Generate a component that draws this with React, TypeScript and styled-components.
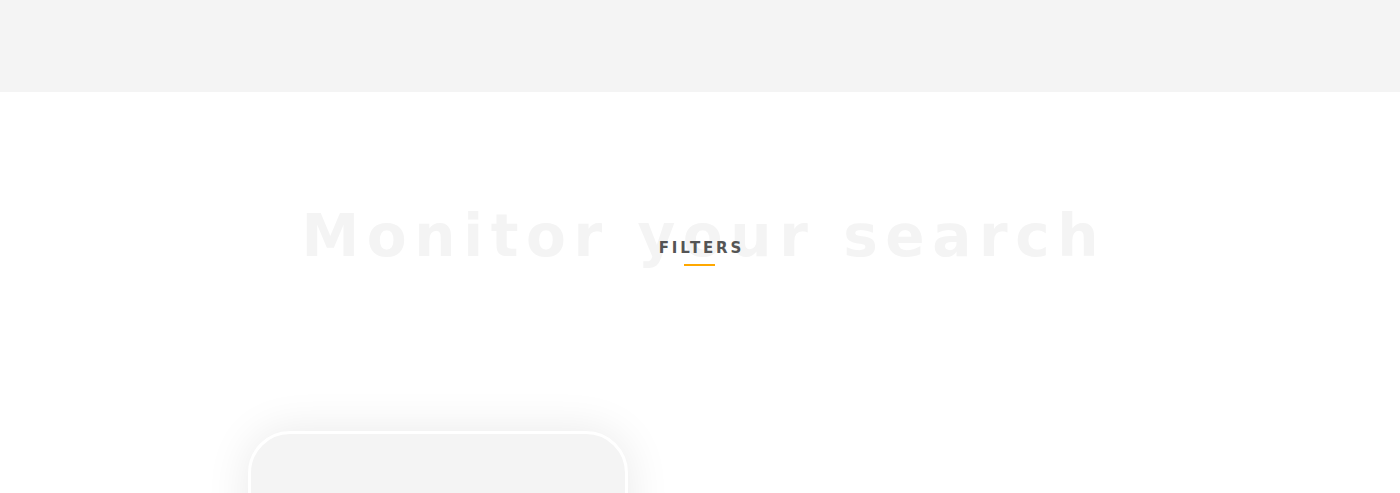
import React from "react";
import styled, { createGlobalStyle } from "styled-components";

const Global = createGlobalStyle`
  html, body { margin: 0; padding: 0; background: #ffffff; overflow: hidden; }
  body { font-family: "DejaVu Sans", "Liberation Sans", sans-serif; }
`;

const TopBar = styled.header`
  height: 92px;
  background: #f4f4f4;
`;

const Section = styled.section`
  display: flex;
  flex-direction: column;
  align-items: center;
  padding-top: 104px;
`;

const TitleStack = styled.div`
  display: grid;
  justify-items: center;
  align-items: start;
`;

const BigTitle = styled.h2`
  grid-area: 1 / 1;
  margin: 0;
  font-family: "DejaVu Sans", sans-serif;
  font-weight: 700;
  font-size: 58px;
  line-height: 80px;
  letter-spacing: 7.6px;
  margin-right: -7.6px;
  color: #f4f4f4;
  white-space: nowrap;
`;

const Label = styled.div`
  grid-area: 1 / 1;
  display: flex;
  flex-direction: column;
  align-items: center;
  padding-top: 42px;
`;

const LabelText = styled.span`
  font-family: "DejaVu Sans", sans-serif;
  font-weight: 700;
  font-size: 15px;
  line-height: 20px;
  letter-spacing: 2.8px;
  margin-right: -2.8px;
  color: #555555;
`;

const Underline = styled.span`
  width: 31px;
  height: 2px;
  margin-top: 6px;
  background: #ffa800;
`;

const Row = styled.div`
  width: 904px;
  display: flex;
  margin-top: 155px;
`;

const Card = styled.div`
  width: 374px;
  height: 200px;
  background: #f4f4f4;
  border: 3px solid #ffffff;
  border-radius: 42px;
  box-shadow: 0 0 45px rgba(0, 0, 0, 0.09);
`;

export default function App() {
  return (
    <>
      <Global />
      <TopBar />
      <Section>
        <TitleStack>
          <BigTitle>Monitor your search</BigTitle>
          <Label>
            <LabelText>FILTERS</LabelText>
            <Underline />
          </Label>
        </TitleStack>
        <Row>
          <Card />
        </Row>
      </Section>
    </>
  );
}
